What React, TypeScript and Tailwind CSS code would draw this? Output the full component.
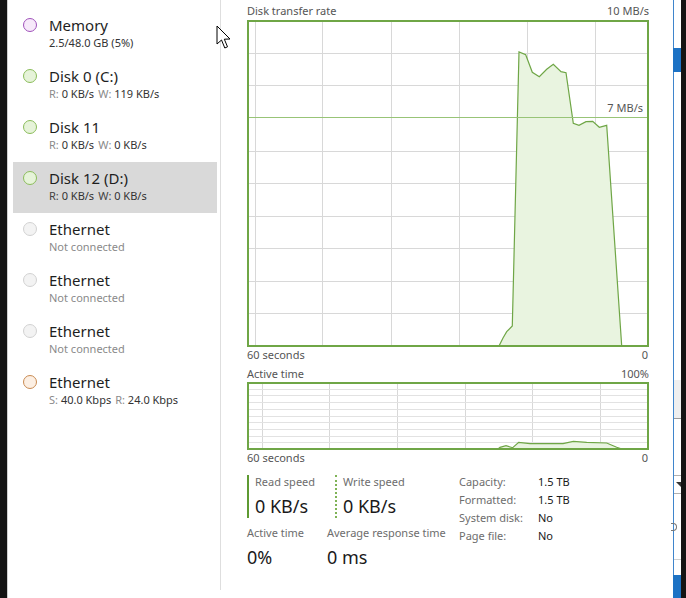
const font = { fontFamily: '"Noto Sans", "Liberation Sans", sans-serif' }

type Item = {
  title: string
  sub: { label?: string; value: string }[]
  ring: string
  fill: string
  muted?: boolean
  selected?: boolean
}

const items: Item[] = [
  { title: "Memory", sub: [{ value: "2.5/48.0 GB (5%)" }], ring: "#a052bb", fill: "#f7e9fa" },
  { title: "Disk 0 (C:)", sub: [{ label: "R:", value: "0 KB/s" }, { label: "W:", value: "119 KB/s" }], ring: "#8bbd5b", fill: "#e6f3d9" },
  { title: "Disk 11", sub: [{ label: "R:", value: "0 KB/s" }, { label: "W:", value: "0 KB/s" }], ring: "#8bbd5b", fill: "#e6f3d9" },
  { title: "Disk 12 (D:)", sub: [{ label: "R:", value: "0 KB/s" }, { label: "W:", value: "0 KB/s" }], ring: "#8bbd5b", fill: "#e6f3d9", selected: true },
  { title: "Ethernet", sub: [{ value: "Not connected" }], ring: "#d2d2d2", fill: "#f3f3f3", muted: true },
  { title: "Ethernet", sub: [{ value: "Not connected" }], ring: "#d2d2d2", fill: "#f3f3f3", muted: true },
  { title: "Ethernet", sub: [{ value: "Not connected" }], ring: "#d2d2d2", fill: "#f3f3f3", muted: true },
  { title: "Ethernet", sub: [{ label: "S:", value: "40.0 Kbps" }, { label: "R:", value: "24.0 Kbps" }], ring: "#c98b52", fill: "#fcefe3" },
]

const SideItem = ({ item }: { item: Item }) => (
  <div className={`flex h-[51px] pl-[10px] pt-[9px] ${item.selected ? "bg-[#d9d9d9]" : ""}`}>
    <div
      className="h-[14px] w-[14px] shrink-0 rounded-full border-[1.5px]"
      style={{ borderColor: item.ring, backgroundColor: item.fill }}
    />
    <div className="-mt-[3px] ml-[12px]">
      <div className="text-[15px] leading-[20px] text-[#1e1e1e]">{item.title}</div>
      <div className="mt-[1px] flex gap-[4px] text-[11px] leading-[14px]">
        {item.sub.map((s, i) => (
          <span key={i} className={item.muted ? "text-[#8a8a8a]" : "text-[#333]"}>
            {s.label && <span className={item.selected ? "text-[#444]" : "text-[#8a8a8a]"}>{s.label} </span>}
            {s.value}
          </span>
        ))}
      </div>
    </div>
  </div>
)

const transfer = [
  [252, 326], [256, 318], [259.7, 311.7], [265.3, 306], [272, 32], [278.7, 34.7], [285.3, 52.3],
  [292.3, 56.7], [299.7, 49.3], [306.3, 44.3], [314, 51.7], [319, 52.7], [326.3, 103.3],
  [332, 105.3], [339, 101.7], [345.7, 101.3], [352.3, 107.3], [359.7, 105.3], [374.7, 326],
]

const active = [
  [251, 67], [253, 65.3], [259, 63.7], [265.7, 65.7], [271.7, 60.3], [283, 61.7], [316, 61.7],
  [326.3, 59.3], [339.7, 60.3], [359.7, 61], [369.7, 65.3], [375, 67],
]

const TransferChart = () => {
  const w = 402
  const h = 327
  const pts = transfer.map((p) => p.join(",")).join(" ")
  return (
    <svg width={w} height={h} className="block">
      <rect x={0} y={0} width={w} height={h} fill="#fff" />
      {[8, 75, 144, 212, 280, 348].map((x) => (
        <line key={x} x1={x + 0.5} x2={x + 0.5} y1={0} y2={h} stroke="#d8d8d8" />
      ))}
      {[33, 65, 131, 163, 196, 228, 261, 293].map((y) => (
        <line key={y} x1={0} x2={w} y1={y + 0.5} y2={y + 0.5} stroke="#d8d8d8" />
      ))}
      <polygon points={pts} fill="#e9f4e0" />
      <polyline points={pts} fill="none" stroke="#6fa646" strokeWidth={1.2} />
      <line x1={0} x2={w} y1={97.5} y2={97.5} stroke="#98c477" />
      <text x={396} y={92} textAnchor="end" fontSize={11} fill="#555" style={font}>
        7 MB/s
      </text>
      <rect x={1} y={1} width={w - 2} height={h - 2} fill="none" stroke="#6fa646" strokeWidth={2} />
    </svg>
  )
}

const ActiveChart = () => {
  const w = 402
  const h = 68
  const pts = active.map((p) => p.join(",")).join(" ")
  return (
    <svg width={w} height={h} className="block">
      <rect x={0} y={0} width={w} height={h} fill="#fff" />
      {[15, 82, 150, 218, 285, 353].map((x) => (
        <line key={x} x1={x + 0.5} x2={x + 0.5} y1={0} y2={h} stroke="#d8d8d8" />
      ))}
      {[1, 2, 3, 4, 5, 6, 7, 8, 9].map((k) => (
        <line key={k} x1={0} x2={w} y1={Math.round(k * 6.7) + 0.5} y2={Math.round(k * 6.7) + 0.5} stroke="#e2e2e2" />
      ))}
      <polygon points={pts} fill="#e9f4e0" />
      <polyline points={pts} fill="none" stroke="#6fa646" strokeWidth={1.2} />
      <rect x={1} y={1} width={w - 2} height={h - 2} fill="none" stroke="#6fa646" strokeWidth={2} />
    </svg>
  )
}

const Cursor = () => (
  <svg width="16" height="26" viewBox="0 0 16 26" className="absolute left-[216px] top-[25px]">
    <path d="M1 1 L1 19 L5.5 15 L8.8 23 L11.5 21.8 L8.3 14.2 L14 14 Z" fill="#fff" stroke="#000" strokeWidth="1" strokeLinejoin="round" />
  </svg>
)

const App = () => {
  return (
    <div className="relative flex h-[598px] w-[686px] overflow-hidden bg-[#141414]" style={font}>
      <div className="w-[7px] shrink-0 bg-[#141414]" />
      <div className="w-[214px] shrink-0 border-l border-[#cfcfcf] bg-[#fff]">
        <div className="h-[590px] border-r border-[#dedede] pl-[5px] pr-[3px] pt-[9px]">
          {items.map((it, i) => (
            <SideItem key={i} item={it} />
          ))}
        </div>
      </div>

      <div className="w-[452px] shrink-0 bg-[#fff] pl-[26px] pr-[24px] pt-[3px]">
        <div className="flex justify-between text-[11px] leading-[16px] text-[#555]">
          <span>Disk transfer rate</span>
          <span>10 MB/s</span>
        </div>
        <div className="mt-[1px]">
          <TransferChart />
        </div>
        <div className="flex justify-between text-[11px] leading-[16px] text-[#555]">
          <span>60 seconds</span>
          <span className="pr-[1px]">0</span>
        </div>
        <div className="mt-[3px] flex justify-between text-[11px] leading-[16px] text-[#555]">
          <span>Active time</span>
          <span>100%</span>
        </div>
        <ActiveChart />
        <div className="flex justify-between text-[11px] leading-[16px] text-[#555]">
          <span>60 seconds</span>
          <span className="pr-[1px]">0</span>
        </div>

        <div className="mt-[9px] flex items-start">
          <div className="w-[212px]">
            <div className="flex">
              <div className="w-[88px] border-l-2 border-[#5e9a32] pl-[6px]">
                <div className="text-[11px] leading-[14px] text-[#6d6d6d]">Read speed</div>
                <div className="mt-[5px] text-[18px] leading-[24px] text-[#1a1a1a]">0 KB/s</div>
              </div>
              <div className="border-l-2 border-dotted border-[#7fb356] pl-[6px]">
                <div className="text-[11px] leading-[14px] text-[#6d6d6d]">Write speed</div>
                <div className="mt-[5px] text-[18px] leading-[24px] text-[#1a1a1a]">0 KB/s</div>
              </div>
            </div>
            <div className="mt-[8px] flex">
              <div className="w-[80px]">
                <div className="text-[11px] leading-[14px] text-[#6d6d6d]">Active time</div>
                <div className="mt-[4px] text-[18px] leading-[26px] text-[#1a1a1a]">0%</div>
              </div>
              <div>
                <div className="whitespace-nowrap text-[11px] leading-[14px] text-[#6d6d6d]">Average response time</div>
                <div className="mt-[4px] text-[18px] leading-[26px] text-[#1a1a1a]">0 ms</div>
              </div>
            </div>
          </div>
          <div className="-mt-[2px] grid grid-cols-[79px_auto] content-start text-[11px] leading-[18px]">
            <span className="text-[#6d6d6d]">Capacity:</span>
            <span className="text-[#1a1a1a]">1.5 TB</span>
            <span className="text-[#6d6d6d]">Formatted:</span>
            <span className="text-[#1a1a1a]">1.5 TB</span>
            <span className="text-[#6d6d6d]">System disk:</span>
            <span className="text-[#1a1a1a]">No</span>
            <span className="text-[#6d6d6d]">Page file:</span>
            <span className="text-[#1a1a1a]">No</span>
          </div>
        </div>
      </div>

      <div className="flex w-[8px] shrink-0 flex-col border-l border-[#3f85cc] bg-[#fff]">
        <div className="h-[48px]" />
        <div className="-ml-px h-[24px] w-[8px] bg-[#1d72c4]" />
        <div className="h-[308px]" />
        <div className="h-[39px] border-b border-[#9a9a9a] bg-[#efefef]" />
        <div className="h-[57px] border-b border-[#b0b0b0]" />
        <div className="flex h-[18px] items-center justify-end border-b border-[#b0b0b0]">
          <div className="h-0 w-0 border-l-[5px] border-t-[5px] border-l-transparent border-t-[#333]" />
        </div>
        <div className="flex h-[66px] flex-col justify-center border-b border-[#d0d0d0]">
          <div className="-ml-[3px] h-[8px] w-[6px] rounded-r-full border border-l-0 border-[#777]" />
        </div>
        <div className="h-[15px]" />
        <div className="-ml-px flex-1 bg-[#1d72c4]" />
      </div>
      <div className="w-[5px] shrink-0 bg-[#141414]" />

      <Cursor />
    </div>
  )
}

export default App
